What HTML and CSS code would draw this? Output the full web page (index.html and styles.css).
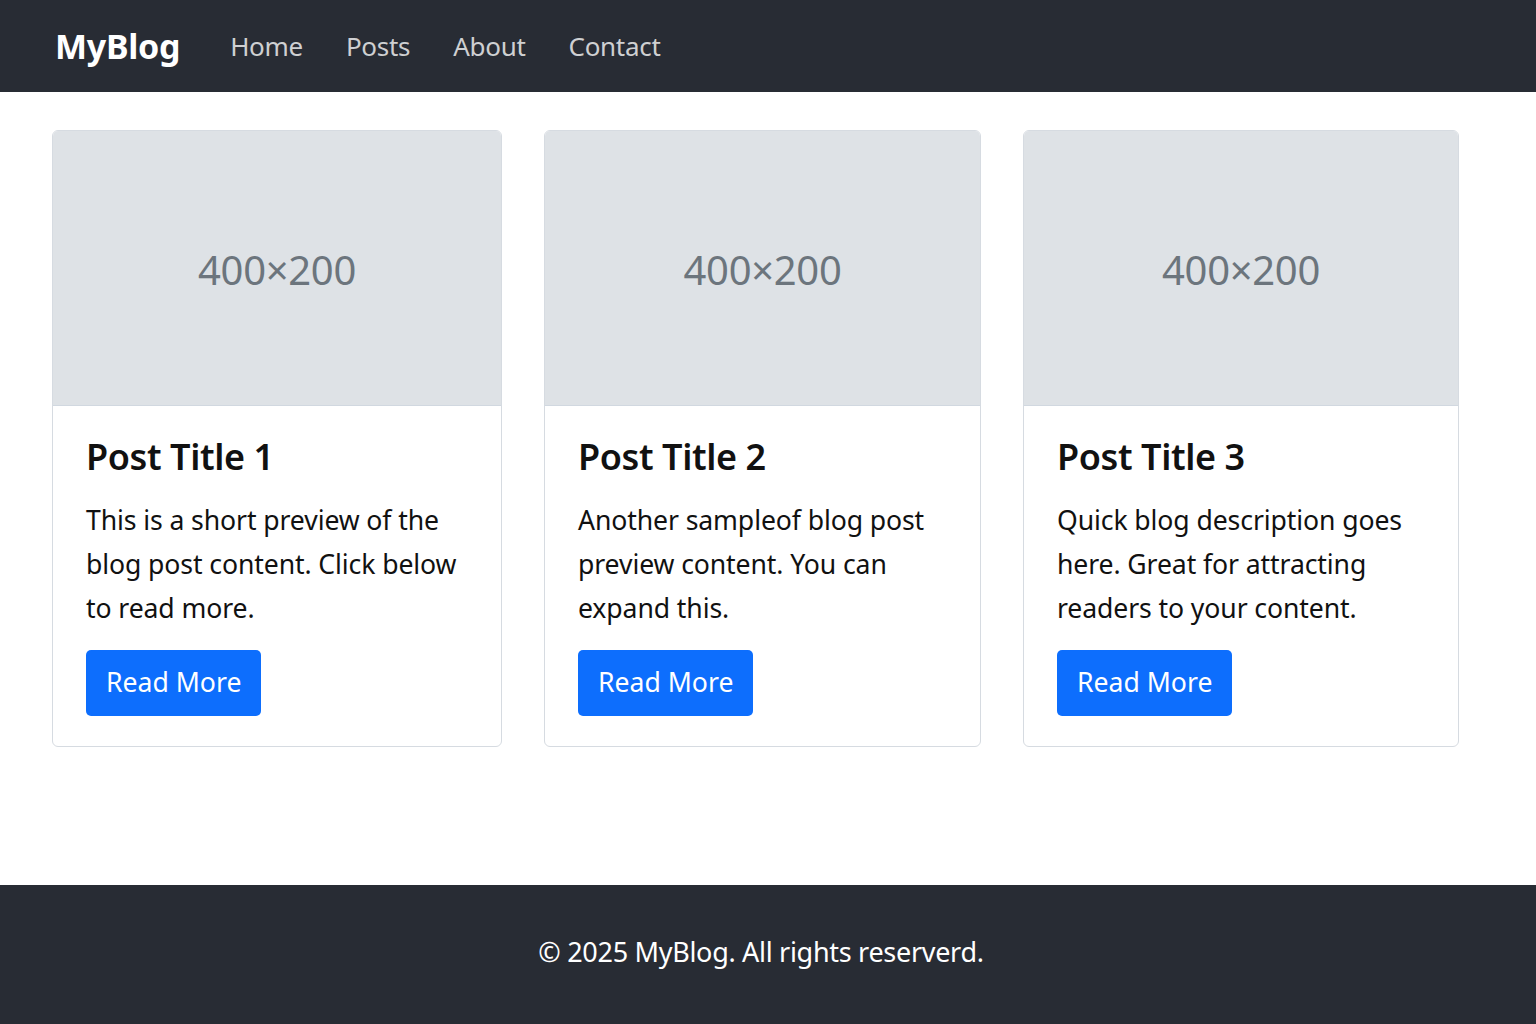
FILE: index.html
```html
<!DOCTYPE html>
<html lang="en">
<head>
<meta charset="utf-8">
<title>MyBlog</title>
<link rel="stylesheet" href="styles.css">
</head>
<body>
<nav class="navbar">
  <a class="brand" href="#">MyBlog</a>
  <ul class="nav-links">
    <li><a href="#">Home</a></li>
    <li><a href="#">Posts</a></li>
    <li><a href="#">About</a></li>
    <li><a href="#">Contact</a></li>
  </ul>
</nav>
<main class="posts">
  <article class="card">
    <div class="thumb">400×200</div>
    <div class="card-body">
      <h2 class="card-title">Post Title 1</h2>
      <p class="card-text">This is a short preview of the blog post content. Click below to read more.</p>
      <a class="btn" href="#">Read More</a>
    </div>
  </article>
  <article class="card">
    <div class="thumb">400×200</div>
    <div class="card-body">
      <h2 class="card-title">Post Title 2</h2>
      <p class="card-text">Another sampleof blog post preview content. You can expand this.</p>
      <a class="btn" href="#">Read More</a>
    </div>
  </article>
  <article class="card">
    <div class="thumb">400×200</div>
    <div class="card-body">
      <h2 class="card-title">Post Title 3</h2>
      <p class="card-text">Quick blog description goes here. Great for attracting readers to your content.</p>
      <a class="btn" href="#">Read More</a>
    </div>
  </article>
</main>
<footer class="footer">© 2025 MyBlog. All rights reserverd.</footer>
</body>
</html>
```

FILE: styles.css
```css
* { box-sizing: border-box; }
html, body { margin: 0; padding: 0; }
body {
  font-family: "Noto Sans", "Open Sans", sans-serif;
  color: #212529;
  background: #fff;
  min-height: 1024px;
  display: flex;
  flex-direction: column;
}
.navbar {
  height: 92px;
  background: #282c34;
  display: flex;
  align-items: center;
  padding-left: 55px;
}
.brand {
  color: #fff;
  font-weight: 700;
  font-size: 34px;
  text-decoration: none;
  letter-spacing: -0.3px;
  margin-right: 50px;
}
.nav-links {
  list-style: none;
  margin: 0;
  padding: 0;
  display: flex;
  gap: 43px;
}
.nav-links a {
  color: rgba(255,255,255,0.78);
  text-decoration: none;
  font-size: 26px;
  letter-spacing: -0.3px;
}
.posts {
  display: grid;
  grid-template-columns: 450px 437px 436px;
  column-gap: 42px;
  padding: 38px 0 0 52px;
  align-items: start;
  flex: 1;
}
.card {
  border: 1px solid #d6dbe1;
  border-radius: 6px;
  overflow: hidden;
  background: #fff;
}
.thumb {
  height: 275px;
  background: #dee2e6;
  border-bottom: 1px solid #d1d8e0;
  display: flex;
  align-items: center;
  justify-content: center;
  color: #6c757d;
  font-size: 40px;
  letter-spacing: -0.3px;
  padding-top: 2px;
}
.card-body {
  padding: 29px 33px 30px 33px;
}
.card-title {
  margin: 0 0 20px;
  font-size: 36px;
  font-weight: 600;
  line-height: 1.2;
  color: #111;
  letter-spacing: -0.4px;
}
.card-text {
  margin: 0 0 20px;
  font-size: 26.6px;
  line-height: 44px;
  color: #111;
  letter-spacing: -0.1px;
}
.btn {
  display: inline-block;
  background: #0d6efd;
  color: #fff;
  text-decoration: none;
  font-size: 26.6px;
  line-height: 35px;
  padding: 15px 20px 16px;
  border-radius: 5px;
  letter-spacing: 0;
}
.footer {
  height: 139px;
  background: #282c34;
  color: #fff;
  display: flex;
  align-items: center;
  justify-content: center;
  font-size: 27px;
  letter-spacing: -0.3px;
  padding: 0 14px 6px 0;
}
```
